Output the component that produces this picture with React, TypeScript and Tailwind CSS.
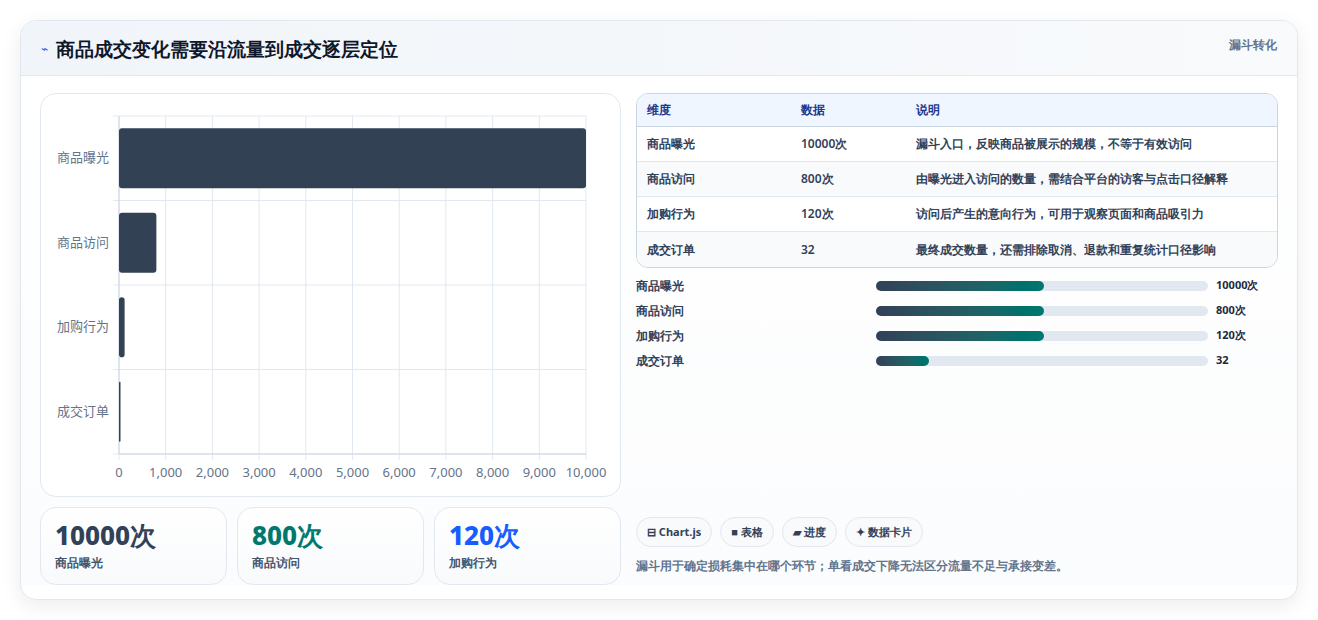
const ROWS = [
  { name: '商品曝光', value: 10000, v: '10000次', desc: '漏斗入口，反映商品被展示的规模，不等于有效访问', pct: 50.5 },
  { name: '商品访问', value: 800, v: '800次', desc: '由曝光进入访问的数量，需结合平台的访客与点击口径解释', pct: 50.5 },
  { name: '加购行为', value: 120, v: '120次', desc: '访问后产生的意向行为，可用于观察页面和商品吸引力', pct: 50.5 },
  { name: '成交订单', value: 32, v: '32', desc: '最终成交数量，还需排除取消、退款和重复统计口径影响', pct: 16 },
]

function Chart() {
  // plot area in svg coords
  const x0 = 78, x1 = 545, y0 = 22, y1 = 360
  const rowH = (y1 - y0) / 4
  const ticks = Array.from({ length: 11 }, (_, i) => i * 1000)
  return (
    <svg width="580" height="402" className="block">
      {ticks.map((t, i) => {
        const x = x0 + ((x1 - x0) * i) / 10
        return <line key={t} x1={x} x2={x} y1={y0} y2={y1 + 6} stroke="#e2e8f0" />
      })}
      {[0, 1, 2, 3, 4].map((i) => (
        <line key={i} x1={x0 - 6} x2={x1} y1={y0 + rowH * i} y2={y0 + rowH * i} stroke="#e2e8f0" />
      ))}
      <line x1={x0} x2={x0} y1={y0} y2={y1} stroke="#cbd5e1" />
      <line x1={x0} x2={x1} y1={y1} y2={y1} stroke="#cbd5e1" />
      {ROWS.map((r, i) => {
        const w = Math.max(((x1 - x0) * r.value) / 10000, 1.5)
        const cy = y0 + rowH * i + rowH / 2
        return (
          <g key={r.name}>
            <rect x={x0} y={cy - 30} width={w} height={60} rx={Math.min(3, w / 2)} fill="#334155" />
            <text x={x0 - 10} y={cy + 4} textAnchor="end" fontSize="13" fill="#64748b" fontFamily="'Noto Sans CJK SC', sans-serif">{r.name}</text>
          </g>
        )
      })}
      {ticks.map((t, i) => (
        <text key={t} x={x0 + ((x1 - x0) * i) / 10} y={y1 + 23} textAnchor="middle" fontSize="13" fill="#64748b" fontFamily="'Noto Sans', sans-serif">
          {t.toLocaleString('en-US')}
        </text>
      ))}
    </svg>
  )
}

function Stat({ v, label, color }: { v: string; label: string; color: string }) {
  return (
    <div className="flex-1 rounded-2xl border border-slate-200 bg-gradient-to-b from-white to-slate-50 px-[14px] pt-[10px] pb-[12px]">
      <div className={`text-[26px] font-extrabold leading-[34px] ${color}`}>{v}</div>
      <div className="mt-[2px] text-[12px] font-semibold text-slate-600">{label}</div>
    </div>
  )
}

export default function App() {
  return (
    <div className="min-h-[620px] bg-white pt-[20px] px-[20px] font-['Noto_Sans','Noto_Sans_CJK_SC',sans-serif]">
      <div className="w-[1278px] h-[580px] overflow-hidden rounded-2xl border border-slate-200 bg-white shadow-[0_6px_20px_rgba(15,23,42,0.08)]">
        <div className="flex h-[55px] items-start justify-between border-b border-slate-200 bg-gradient-to-r from-slate-100 to-slate-50 px-[20px]">
          <div className="flex items-center gap-[8px] pt-[14px]">
            <span className="text-[12px] text-blue-600">⌁</span>
            <h1 className="text-[19px] font-extrabold text-slate-900">商品成交变化需要沿流量到成交逐层定位</h1>
          </div>
          <span className="pt-[15px] text-[12px] font-bold text-slate-500">漏斗转化</span>
        </div>
        <div className="flex gap-[15px] bg-gradient-to-b from-white to-slate-50/60 px-[19px] pt-[17px]">
          <div className="w-[581px] shrink-0">
            <div className="h-[404px] rounded-2xl border border-slate-200 bg-white">
              <Chart />
            </div>
            <div className="mt-[10px] flex gap-[10px]">
              <Stat v="10000次" label="商品曝光" color="text-slate-700" />
              <Stat v="800次" label="商品访问" color="text-teal-700" />
              <Stat v="120次" label="加购行为" color="text-blue-600" />
            </div>
          </div>
          <div className="flex h-[487px] flex-1 flex-col">
            <div className="overflow-hidden rounded-xl border border-slate-300 text-[12px]">
              <div className="flex h-[33px] items-center border-b border-slate-300 bg-blue-50 px-[10px] font-bold text-blue-900">
                <span className="w-[154px]">维度</span><span className="w-[115px]">数据</span><span>说明</span>
              </div>
              {ROWS.map((r, i) => (
                <div key={r.name} className={`flex h-[35px] items-center px-[10px] font-semibold text-slate-700 ${i < 3 ? 'border-b border-slate-200' : ''} ${i % 2 ? 'bg-slate-50' : 'bg-white'}`}>
                  <span className="w-[154px]">{r.name}</span><span className="w-[115px]">{r.v}</span><span>{r.desc}</span>
                </div>
              ))}
            </div>
            <div className="mt-[10px] flex flex-col gap-[10px]">
              {ROWS.map((r) => (
                <div key={r.name} className="flex h-[15px] items-center text-[12px] font-bold text-slate-700">
                  <span className="w-[240px]">{r.name}</span>
                  <div className="h-[10px] w-[332px] rounded-full bg-slate-200">
                    <div className="h-full rounded-full bg-gradient-to-r from-slate-700 to-teal-700" style={{ width: `${r.pct}%` }} />
                  </div>
                  <span className="ml-[8px] text-[11px] text-slate-800">{r.v}</span>
                </div>
              ))}
            </div>
            <div className="mt-auto pb-[5px]">
              <div className="flex gap-[8px] text-[11px] font-bold text-slate-700">
                <span className="rounded-full border border-slate-200 bg-slate-50 px-[10px] py-[6px]">⊟ Chart.js</span>
                <span className="rounded-full border border-slate-200 bg-slate-50 px-[10px] py-[6px]">■ 表格</span>
                <span className="rounded-full border border-slate-200 bg-slate-50 px-[10px] py-[6px]">▰ 进度</span>
                <span className="rounded-full border border-slate-200 bg-slate-50 px-[10px] py-[6px]">✦ 数据卡片</span>
              </div>
              <p className="mt-[10px] text-[12px] font-semibold text-slate-500">漏斗用于确定损耗集中在哪个环节；单看成交下降无法区分流量不足与承接变差。</p>
            </div>
          </div>
        </div>
      </div>
    </div>
  )
}
